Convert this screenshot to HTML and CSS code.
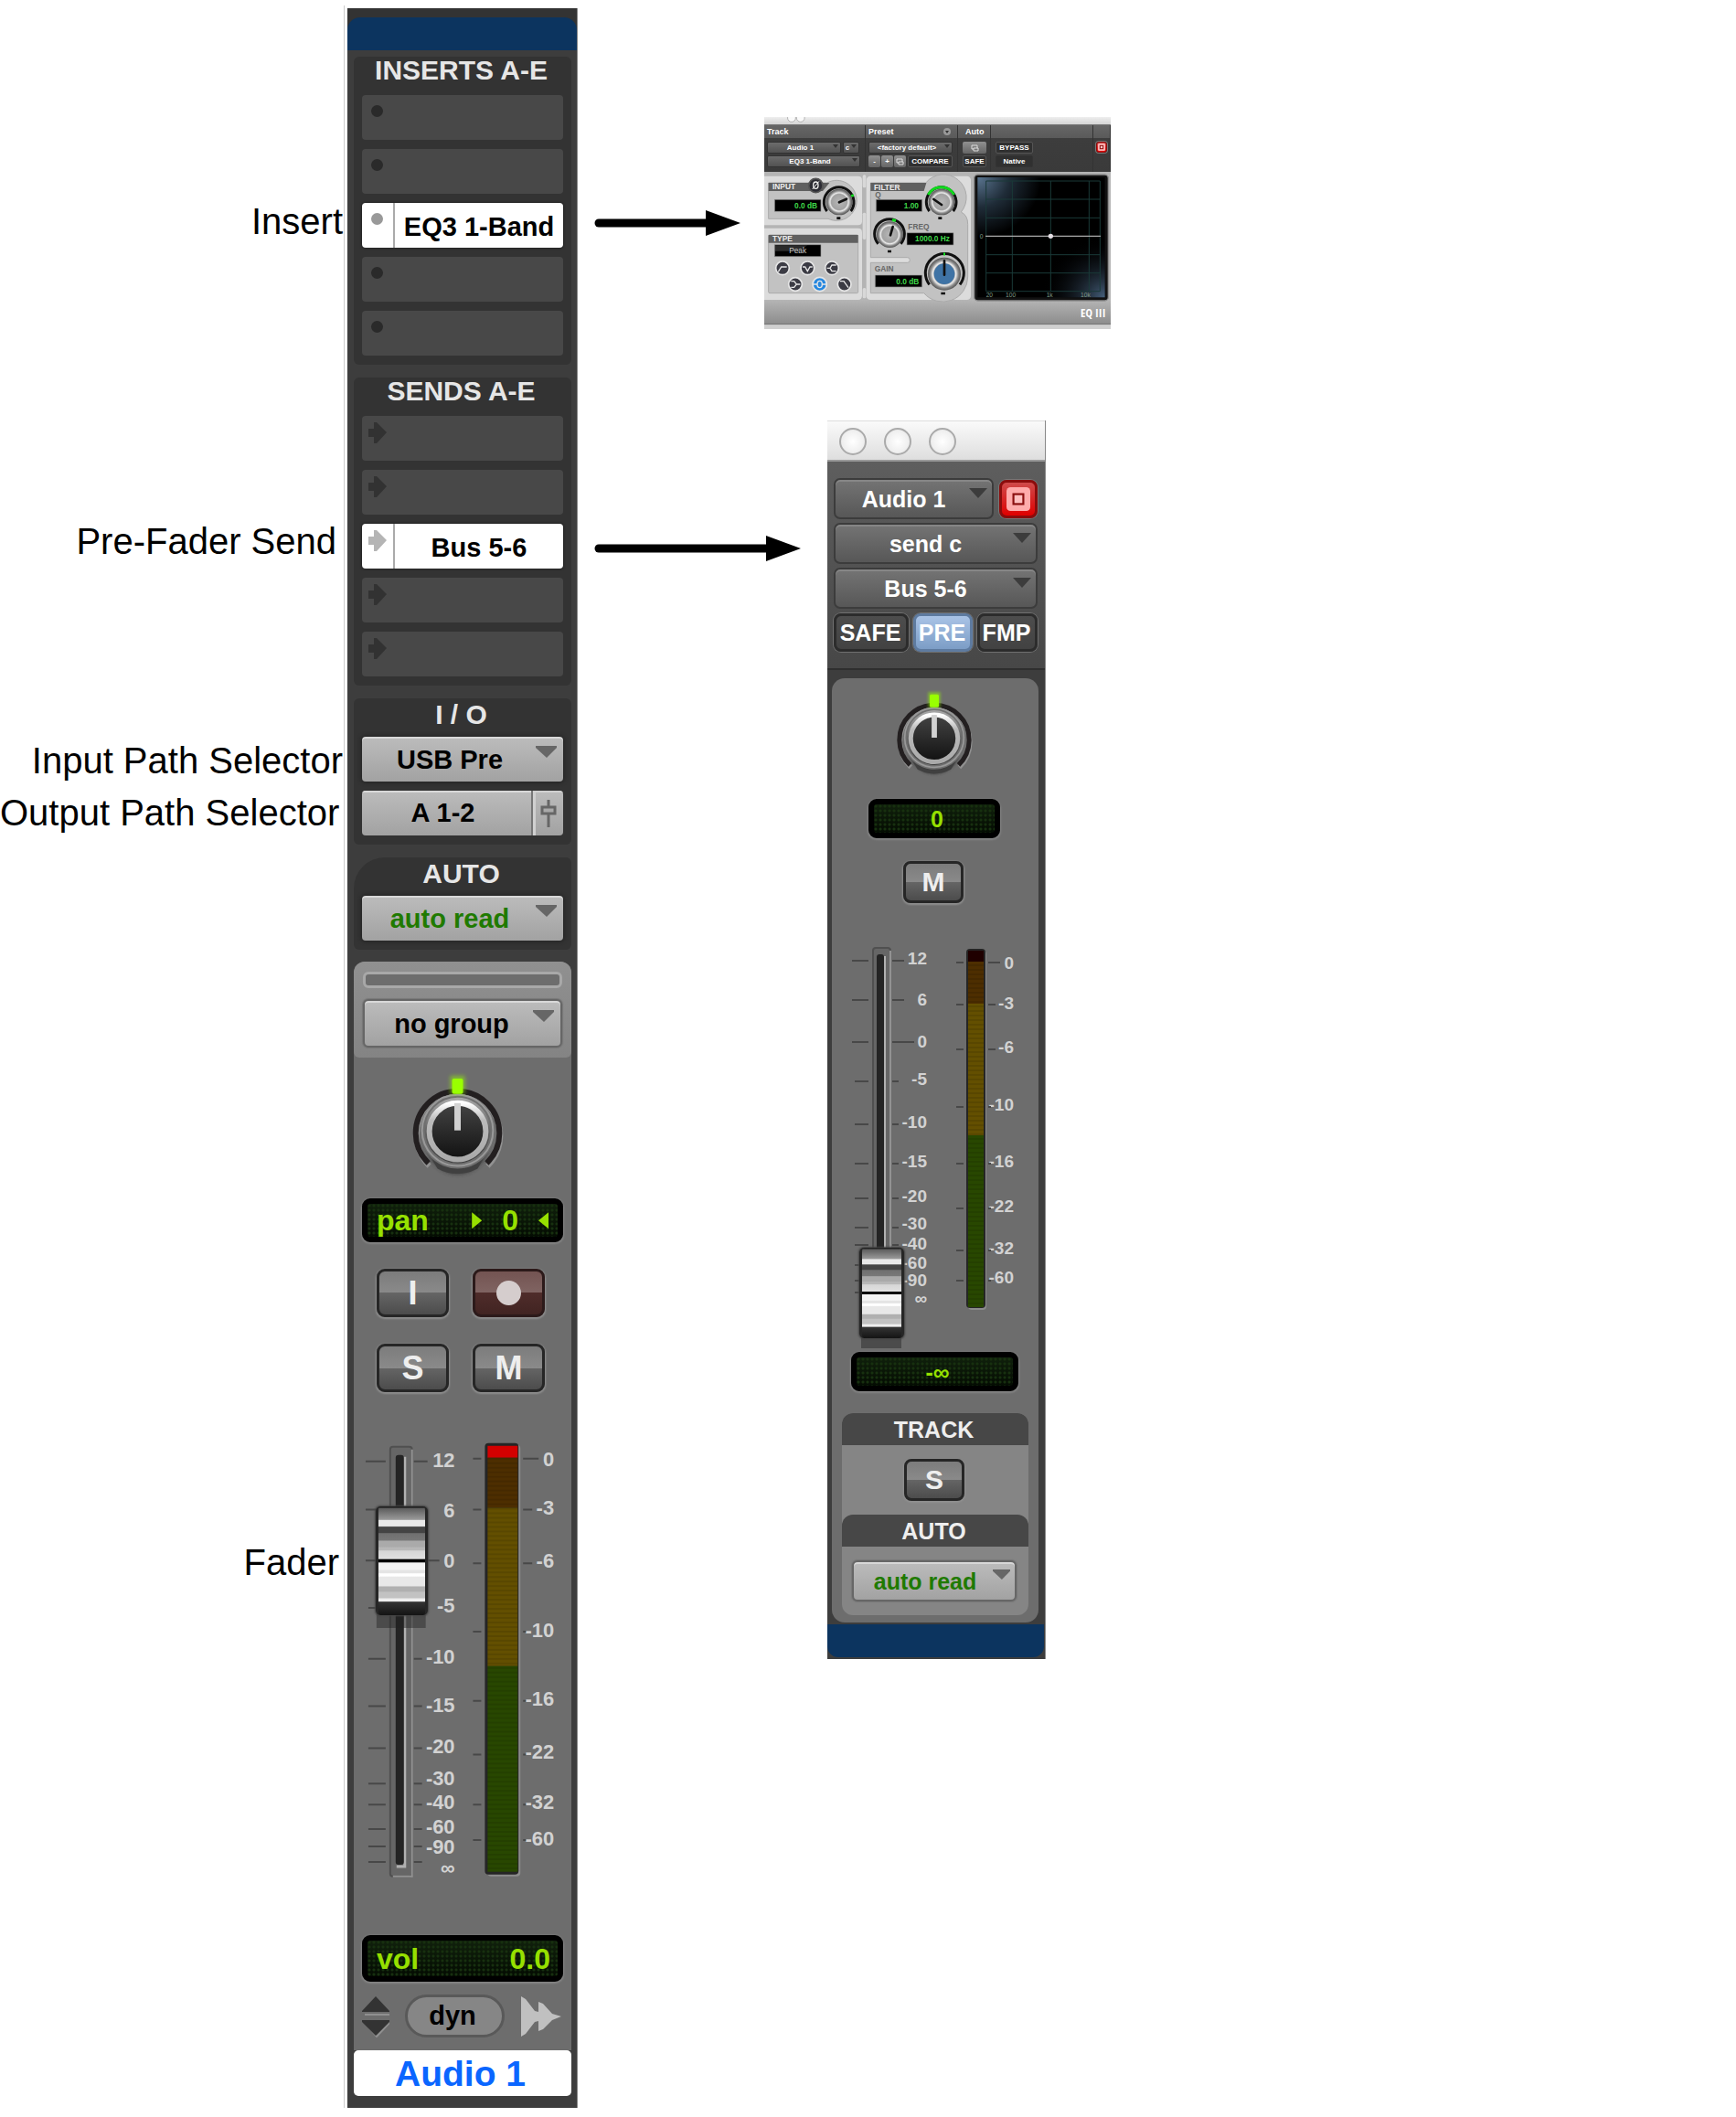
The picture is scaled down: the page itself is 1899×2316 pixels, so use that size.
FILE: index.html
```html
<!DOCTYPE html>
<html lang="en">
<head>
<meta charset="utf-8">
<meta name="viewport" content="width=device-width, initial-scale=1">
<title>Channel strip signal path</title>
<link rel="stylesheet" href="styles.css">
</head>
<body>
<svg class="defs" aria-hidden="true">
  <defs>
    <linearGradient id="ring" x1="0" y1="0" x2="0" y2="1"><stop offset="0" stop-color="#fff"/><stop offset=".3" stop-color="#bbb"/><stop offset="1" stop-color="#aaa"/></linearGradient>
    <linearGradient id="knobface" x1="0" y1="0" x2="0" y2="1"><stop offset="0" stop-color="#444"/><stop offset="1" stop-color="#111"/></linearGradient>
    <linearGradient id="knobbase" x1="0" y1="0" x2="0" y2="1"><stop offset="0" stop-color="#a8a8a8"/><stop offset=".5" stop-color="#666"/><stop offset="1" stop-color="#3c3c3c"/></linearGradient>
    <filter id="soft" x="-50%" y="-50%" width="200%" height="200%"><feGaussianBlur stdDeviation="2"/></filter>
    <symbol id="pan-knob" viewBox="-60 -70 120 130" overflow="visible">
      <path d="M-32 36A46 46 0 1 1 32 36" fill="none" stroke="#919191" stroke-width="6" transform="translate(1 3)"/>
      <path d="M-32 36A46 46 0 1 1 32 36" fill="none" stroke="#231f20" stroke-width="6"/>
      <circle cy="14" r="34" fill="#333" filter="url(#soft)" opacity=".8"/>
      <circle r="41" cy="1" fill="#6f6f6f"/>
      <path d="M-28 32A42 42 0 0 0 28 32L22 42A46 46 0 0 1-22 42Z" fill="#404040"/>
      <circle r="39" fill="none" stroke="#999" stroke-width="2"/>
      <circle r="36" fill="url(#knobbase)"/>
      <circle r="31" cy="1" fill="url(#knobface)" stroke="url(#ring)" stroke-width="6"/>
      <path d="M0-30V0" stroke="#d2d2d2" stroke-width="7"/>
      <rect x="-8" y="-60" width="16" height="20" fill="#9f0" opacity=".5" filter="url(#soft)"/>
      <rect x="-6" y="-57" width="12" height="17" rx="2" fill="#9f0"/>
    </symbol>
    <pattern id="scan" width="8" height="5" patternUnits="userSpaceOnUse"><rect width="8" height="2" fill="#000" opacity=".1"/></pattern>
    <radialGradient id="metal"><stop offset="0" stop-color="#b8b8b8"/><stop offset=".6" stop-color="#a2a2a2"/><stop offset=".7" stop-color="#ececec"/><stop offset=".85" stop-color="#8a8a8a"/><stop offset="1" stop-color="#555"/></radialGradient>
    <linearGradient id="plate" x1="0" y1="0" x2="0" y2="1"><stop offset="0" stop-color="#b5b5b5"/><stop offset="1" stop-color="#8c8c8c"/></linearGradient>
    <radialGradient id="glass1" cx="0" cy="0" r="1"><stop offset="0" stop-color="#5a7590"/><stop offset=".25" stop-color="#1f2c38"/><stop offset=".5" stop-color="#000"/></radialGradient>
    <radialGradient id="glass2" cx="1" cy="1" r=".5"><stop offset="0" stop-color="#46607c"/><stop offset="1" stop-color="#000" stop-opacity="0"/></radialGradient>
  </defs>
</svg>

<main class="diagram">
  <div class="labels">
    <p class="label label-insert flush">Insert</p>
    <p class="label label-send">Pre-Fader Send</p>
    <p class="label label-input flush">Input Path Selector</p>
    <p class="label label-output">Output Path Selector</p>
    <p class="label label-fader">Fader</p>
  </div>

  <section class="strip" aria-label="Audio 1 channel strip">
    <div class="strip-cap"><div class="strip-color"></div></div>

    <div class="bank">
      <h2 class="bank-title">INSERTS A-E</h2>
      <button class="slot" aria-label="Insert A"><i class="dot"></i></button>
      <button class="slot" aria-label="Insert B"><i class="dot"></i></button>
      <button class="slot used"><span class="mark"><i class="dot"></i></span><span class="slot-name">EQ3 1-Band</span></button>
      <button class="slot" aria-label="Insert D"><i class="dot"></i></button>
      <button class="slot" aria-label="Insert E"><i class="dot"></i></button>
    </div>

    <div class="bank">
      <h2 class="bank-title">SENDS A-E</h2>
      <button class="slot" aria-label="Send A"><svg class="send-arrow" viewBox="0 0 20 23"><path d="M0 7H6V0H9L20 11 9 23H6V16H0Z"/></svg></button>
      <button class="slot" aria-label="Send B"><svg class="send-arrow" viewBox="0 0 20 23"><path d="M0 7H6V0H9L20 11 9 23H6V16H0Z"/></svg></button>
      <button class="slot used"><span class="mark"><svg class="send-arrow" viewBox="0 0 20 23"><path d="M0 7H6V0H9L20 11 9 23H6V16H0Z"/></svg></span><span class="slot-name">Bus 5-6</span></button>
      <button class="slot" aria-label="Send D"><svg class="send-arrow" viewBox="0 0 20 23"><path d="M0 7H6V0H9L20 11 9 23H6V16H0Z"/></svg></button>
      <button class="slot" aria-label="Send E"><svg class="send-arrow" viewBox="0 0 20 23"><path d="M0 7H6V0H9L20 11 9 23H6V16H0Z"/></svg></button>
    </div>

    <div class="bank">
      <h2 class="bank-title low">I / O</h2>
      <select class="picker" aria-label="Input path"><option>USB Pre</option></select>
      <div class="output">
        <button class="output-name">A 1-2</button>
        <button class="output-open" aria-label="Open output window"><svg width="18" height="30" viewBox="0 0 18 30"><path d="M9 0V30" stroke="#666" stroke-width="3"/><rect x="2" y="8" width="14" height="7" fill="#aaa" stroke="#666" stroke-width="3"/></svg></button>
      </div>
    </div>

    <div class="bank bank-auto">
      <h2 class="bank-title low">AUTO</h2>
      <select class="picker green" aria-label="Automation mode"><option>auto read</option></select>
    </div>

    <div class="mixer">
      <div class="group">
        <div class="group-bar"></div>
        <select class="picker framed" aria-label="Group"><option>no group</option></select>
      </div>
      <svg class="art" viewBox="-114 -80 239 155" role="img" aria-label="Pan knob"><use href="#pan-knob" x="-60" y="-70" width="120" height="130"/></svg>
      <div class="lcd lcd-pan"><span class="grow">pan</span><i class="tri-right"></i><span class="pan-value">0</span><i class="tri-left"></i></div>
      <div class="keys">
        <button class="key">I</button>
        <button class="key rec" aria-label="Record enable"><i class="rec-dot"></i></button>
        <button class="key">S</button>
        <button class="key">M</button>
      </div>
      <div class="fader">
        <svg class="art scale" viewBox="387 1539 239 559">
          <rect x="427" y="1583" width="24" height="472" rx="3" fill="#666" stroke="#505050" stroke-width="2"/>
          <path d="M451 1586V2055H430" fill="none" stroke="#929292" stroke-width="2"/>
          <path d="M443 1594V2044H434" fill="none" stroke="#b0b0b0" stroke-width="3"/>
          <rect x="433" y="1592" width="9" height="450" rx="3" fill="#242424"/>
          <path class="tick" d="M400 1599h22M400 1652h22M400 1708h22M403 1760h19M403 1816h19M403 1868h19M403 1914h19M403 1953h19M403 1976h19M403 2003h19M403 2022h19M403 2039h19M453 1599h15M453 1652h15M453 1708h28M453 1816h9M453 1868h9M453 1914h9M453 1953h9M453 1976h9M453 2003h9M453 2022h9M453 2039h9"/>
          <path d="M412 1740h54v42h-54z" fill="#222" opacity=".45"/>
          <g class="marks">
            <text x="498" y="1605">12</text><text x="498" y="1661">6</text><text x="498" y="1716">0</text><text x="498" y="1765">-5</text><text x="498" y="1821">-10</text><text x="498" y="1874">-15</text><text x="498" y="1920">-20</text><text x="498" y="1955">-30</text><text x="498" y="1981">-40</text><text x="498" y="2008">-60</text><text x="498" y="2030">-90</text><text x="498" y="2053">∞</text>
            <text x="607" y="1604">0</text><text x="607" y="1658">-3</text><text x="607" y="1716">-6</text><text x="607" y="1792">-10</text><text x="607" y="1867">-16</text><text x="607" y="1926">-22</text><text x="607" y="1981">-32</text><text x="607" y="2021">-60</text>
          </g>
          <path class="tick" d="M518 1596h9M518 1652h9M518 1711h9M518 1786h9M518 1862h9M518 1921h9M518 1976h9M518 2015h9M573 1596h17M573 1652h10M573 1711h10M573 1786h3M573 1862h3M573 1921h3M573 1976h3M573 2015h3"/>
          <rect x="534" y="1581" width="36" height="474" rx="4" fill="#8c8c8c"/>
          <rect x="531" y="1579" width="37" height="474" rx="4" fill="#252525"/>
          <path d="M534 1582h33v13h-33z" fill="#d40000"/>
          <path d="M534 1595h33v55h-33z" fill="#4d2e00"/>
          <path d="M534 1650h33v174h-33z" fill="#634f00"/>
          <path d="M534 1824h33v226h-33z" fill="#284700"/>
          <path d="M534 1595h33v455h-33z" fill="url(#scan)"/>
        </svg>
        <input class="cap" type="range" min="0" max="440" value="331" aria-label="Volume">
      </div>
      <div class="lcd lcd-vol"><span class="grow">vol</span><span>0.0</span></div>
      <div class="foot">
        <svg width="30" height="46" viewBox="0 0 30 46"><path d="M3 21H31M3 29 16 45 31 29" stroke="#909090" stroke-width="2" fill="none"/><path d="M0 17 15 1 30 17V18H0ZM0 27V29L15 44 30 29V27Z" fill="#333"/></svg>
        <button class="dyn">dyn</button>
        <svg width="44" height="46" viewBox="0 0 44 46"><path d="M0 1 5 4 15 17 19 18V7L24 9 34 20 44 23 34 27 24 37 19 39V28L15 29 5 42 0 45Z" fill="#c0c0c0"/></svg>
      </div>
    </div>
    <div class="track-name">Audio 1</div>
  </section>

  <div class="windows">
    <div class="callout callout-eq">
      <svg class="arrow" width="160" height="28" viewBox="0 0 160 28"><path d="M5 14H124" stroke="#000" stroke-width="9" stroke-linecap="round"/><path d="M122 0 160 14 122 28Z"/></svg>

      <section class="eq" aria-label="EQ3 1-Band plug-in">
        <svg class="eq-bar" viewBox="0 0 379 9"><g fill="#fafafa" stroke="#aaa"><circle cx="10" cy="1" r="5"/><circle cx="21" cy="1" r="5"/></g></svg>
        <div class="eq-head">
          <div class="eq-col"><h3>Track</h3>
            <div class="eq-row"><select class="mini w81" aria-label="Track"><option>Audio 1</option></select><select class="mini w18" aria-label="Insert position"><option>c</option></select></div>
            <div class="eq-row"><select class="mini w102" aria-label="Plug-in"><option>EQ3 1-Band</option></select></div>
          </div>
          <div class="eq-col"><h3>Preset<svg width="8" height="8" viewBox="0 0 8 8"><circle cx="4" cy="4" r="4" fill="#999"/><path d="M2 3H6L4 6Z" fill="#333"/></svg></h3>
            <div class="eq-row"><select class="mini w92" aria-label="Preset"><option>&lt;factory default&gt;</option></select></div>
            <div class="eq-row"><span class="trio"><button class="lite">-</button><button class="lite">+</button><button class="lite" aria-label="Preset list"><svg width="9" height="8" viewBox="0 0 9 8"><path d="M1 1H7V4M1 1V5H3M3 4H8V7H3Z" fill="none" stroke="#ddd"/></svg></button></span><button class="dark w49">COMPARE</button></div>
          </div>
          <div class="eq-col inset"><h3 class="shift">Auto</h3>
            <div class="eq-row"><button class="lite w26" aria-label="Automation enable"><svg width="9" height="8" viewBox="0 0 9 8"><path d="M1 1H7V4M1 1V5H3M3 4H8V7H3Z" fill="none" stroke="#ddd"/></svg></button></div>
            <div class="eq-row"><button class="dark w26">SAFE</button></div>
          </div>
          <div class="eq-col inset"><h3></h3>
            <div class="eq-row"><button class="dark w41">BYPASS</button></div>
            <div class="eq-row"><button class="dark w41 plain">Native</button></div>
          </div>
          <div class="eq-col"><h3></h3>
            <div class="eq-row"><button class="target small" aria-label="Target"><svg viewBox="0 0 24 24"><rect width="24" height="24" rx="4" fill="#ffb5b5"/><rect x="7" y="7" width="10" height="10" fill="#ffc9c9" stroke="#8c1010" stroke-width="3"/></svg></button></div>
          </div>
        </div>
        <svg class="eq-body" viewBox="48 220 1137 516" role="img" aria-label="EQ controls and response curve">
          <rect x="48" y="220" width="1137" height="516" fill="#b4b4b4"/>
          <rect x="48" y="640" width="1137" height="80" fill="url(#plate)"/>
          <path d="M48 718h1137v4H48z" fill="#777"/><path d="M48 722h1137v14H48z" fill="#d0d0d0"/>
          <g fill="#dcdcdc">
            <path d="M48 234H356Q369 234 369 247V383Q369 395 356 395H48Z"/>
            <path d="M48 405H356Q369 405 369 418V626Q369 640 356 640H48Z"/>
            <rect x="383" y="234" width="343" height="406" rx="13"/>
          </g>
          <g fill="#d8d8d8"><rect x="371" y="230" width="11" height="42" rx="5"/><rect x="371" y="354" width="11" height="88" rx="5"/><rect x="371" y="601" width="11" height="34" rx="5"/></g>
          <g fill="#c2c2c2" stroke="#aaa" stroke-width="3">
            <path d="M62 256H254A66 66 0 1 1 258 374H62Z"/>
            <rect x="62" y="427" width="294" height="191" rx="4"/>
            <path d="M397 256H578A66 66 0 0 1 694 352Q716 362 716 392V565A82 82 0 0 1 572 618H397V518H518Q526 518 526 510 526 501 518 501H397Z"/>
          </g>
          <path d="M62 256H262L240 283H62ZM62 427H356V453H62ZM397 256H580L572 283H397Z" fill="#606060"/>
          <g fill="#000" stroke="#999" stroke-width="2"><path d="M82 311H234V350H82ZM415 311H566V350H415ZM516 420H669V460H516ZM412 559H566V598H412ZM82 459H234V498H82Z"/></g>
          <path d="M84 461H190L160 480H84Z" fill="#2b2b2b"/>
          <g class="plate-title"><text x="75" y="278">INPUT</text><text x="75" y="449">TYPE</text><text x="408" y="279">FILTER</text></g>
          <g class="plate-name"><text x="412" y="304">Q</text><text x="520" y="410">FREQ</text><text x="410" y="548">GAIN</text></g>
          <g class="plate-value"><text x="222" y="340">0.0 dB</text><text x="555" y="340">1.00</text><text x="657" y="449">1000.0 Hz</text><text x="556" y="588">0.0 dB</text></g>
          <text class="plate-mode" x="158" y="487">Peak</text>
          <g fill="none" stroke="#111" stroke-width="9">
            <path d="M254 349A49 49 0 1 1 332 349"/><path d="M590 349A49 49 0 1 1 668 349"/><path d="M422 456A49 49 0 1 1 496 456"/><path d="M590 590A63 63 0 1 1 690 590"/>
          </g>
          <g fill="none" stroke="#0fdb1c" stroke-width="9"><path d="M586 295A49 49 0 0 1 671 295"/><path d="M336 294 339 302M468 378 480 380M636 490 642 490"/></g>
          <g fill="url(#metal)"><circle cx="294" cy="319" r="43"/><circle cx="630" cy="319" r="43"/><circle cx="460" cy="426" r="43"/><circle cx="639" cy="555" r="54"/></g>
          <circle cx="639" cy="555" r="34" fill="#3f73a5"/>
          <path d="M294 320 318 309M630 328 604 310M462 428 470 400M639 558V512" stroke="#111" stroke-width="8" stroke-linecap="round"/>
          <path d="M286 368H298V376H286ZM619 368H631V376H619ZM453 477H465V485H453ZM628 615H642V623H628Z" fill="#111"/>
          <circle cx="217" cy="265" r="23" fill="#2b2b33" stroke="#555" stroke-width="5"/><ellipse cx="217" cy="264" rx="8" ry="11" fill="none" stroke="#eee" stroke-width="4"/><path d="M206 277 228 251" stroke="#eee" stroke-width="3"/>
          <g fill="#3b3b44" stroke="#e6e6e6" stroke-width="5"><circle cx="108" cy="536" r="22"/><circle cx="190" cy="536" r="22"/><circle cx="270" cy="536" r="22"/><circle cx="150" cy="589" r="22"/><circle cx="230" cy="589" r="23" fill="#2587df"/><circle cx="311" cy="589" r="22"/></g>
          <g fill="none" stroke="#e8e8e8" stroke-width="4"><path d="M94 548 104 532H122M174 532H182L190 546 198 532H206M254 536H264L270 526H284M264 536 270 546H284M136 579H146L154 589 146 599H136M154 589H166M208 589H222M238 589H252M297 579H309L324 600"/><ellipse cx="230" cy="589" rx="8" ry="11"/></g>
          <rect x="737" y="229" width="440" height="414" rx="12" fill="#111" stroke="#8d8d8d" stroke-width="4"/>
          <rect x="748" y="238" width="418" height="394" fill="url(#glass1)"/><rect x="748" y="238" width="418" height="394" fill="url(#glass2)"/>
          <path d="M776 250H1150V612H776ZM862 250V612M988 250V612M1114 250V612M776 310H1150M776 371H1150M776 492H1150M776 552H1150" fill="none" stroke="#1a3a38" stroke-width="3"/>
          <path d="M774 431H1152" stroke="#aaa" stroke-width="4"/><circle cx="988" cy="431" r="8" fill="#e5dfe5"/>
          <g class="plate-axis"><text x="755" y="438">0</text><text x="776" y="632">20</text><text x="840" y="632">100</text><text x="974" y="632">1k</text><text x="1086" y="632">10k</text></g>
          <text class="plate-logo" x="1086" y="697">EQ III</text>
        </svg>
      </section>
    </div>

    <div class="callout callout-send">
      <svg class="arrow arrow-send" width="226" height="28" viewBox="0 0 226 28"><path d="M5 14H190" stroke="#000" stroke-width="9" stroke-linecap="round"/><path d="M188 0 226 14 188 28Z"/></svg>

      <section class="send" aria-label="Send c window">
        <div class="send-bar"><i class="light"></i><i class="light"></i><i class="light"></i></div>
        <div class="send-head">
          <div class="send-row"><select class="combo" aria-label="Track"><option>Audio 1</option></select><button class="target" aria-label="Target"><svg viewBox="0 0 24 24"><rect width="24" height="24" rx="4" fill="#ffabab"/><rect x="7" y="7" width="10" height="10" fill="#ffc0c0" stroke="#8c1010" stroke-width="2"/></svg></button></div>
          <select class="combo" aria-label="Send"><option>send c</option></select>
          <select class="combo" aria-label="Output"><option>Bus 5-6</option></select>
          <div class="modes"><button class="mode">SAFE</button><button class="mode on">PRE</button><button class="mode">FMP</button></div>
        </div>
        <div class="send-panel">
          <svg class="art" viewBox="-112 -65 226 132" role="img" aria-label="Send pan knob"><g transform="scale(.83)"><use href="#pan-knob" x="-60" y="-70" width="120" height="130"/></g></svg>
          <div class="lcd lcd-small lcd-sendpan"><span>0</span></div>
          <button class="key key-small key-mute">M</button>
          <div class="fader">
            <svg class="art scale" viewBox="910 1002 226 477">
              <rect x="955" y="1037" width="19" height="390" rx="3" fill="#666" stroke="#505050" stroke-width="2"/>
              <path d="M974 1040V1400" stroke="#929292" stroke-width="2"/>
              <path d="M968 1046V1400" stroke="#b0b0b0" stroke-width="2"/>
              <rect x="959" y="1044" width="8" height="370" rx="3" fill="#242424"/>
              <path class="tick" d="M932 1051h18M932 1094h18M932 1140h18M935 1183h15M935 1230h15M935 1273h15M935 1311h15M935 1343h15M935 1362h15M935 1384h15M935 1401h15M935 1414h15M976 1051h13M976 1094h13M976 1140h24M976 1183h7M976 1230h7M976 1273h7M976 1311h7M976 1343h7M976 1362h7"/>
              <path d="M942 1440h44v35h-44z" fill="#222" opacity=".45"/>
              <g class="marks marks-small">
                <text x="1014" y="1055">12</text><text x="1014" y="1100">6</text><text x="1014" y="1146">0</text><text x="1014" y="1187">-5</text><text x="1014" y="1234">-10</text><text x="1014" y="1277">-15</text><text x="1014" y="1315">-20</text><text x="1014" y="1345">-30</text><text x="1014" y="1367">-40</text><text x="1014" y="1388">-60</text><text x="1014" y="1407">-90</text><text x="1014" y="1427">∞</text>
                <text x="1109" y="1060">0</text><text x="1109" y="1104">-3</text><text x="1109" y="1152">-6</text><text x="1109" y="1215">-10</text><text x="1109" y="1277">-16</text><text x="1109" y="1326">-22</text><text x="1109" y="1372">-32</text><text x="1109" y="1404">-60</text>
              </g>
              <path class="tick" d="M1046 1053h8M1046 1099h8M1046 1148h8M1046 1211h8M1046 1273h8M1046 1322h8M1046 1368h8M1046 1401h8M1081 1053h13M1081 1099h8M1081 1148h8M1081 1211h3M1081 1273h3M1081 1322h3M1081 1368h3M1081 1401h3"/>
              <rect x="1059" y="1040" width="20" height="393" rx="4" fill="#8c8c8c"/>
              <rect x="1057" y="1038" width="21" height="393" rx="4" fill="#252525"/>
              <path d="M1059 1040h17v12h-17z" fill="#1f0000"/>
              <path d="M1059 1052h17v46h-17z" fill="#4d2e00"/>
              <path d="M1059 1098h17v144h-17z" fill="#634f00"/>
              <path d="M1059 1242h17v188h-17z" fill="#284700"/>
              <path d="M1059 1052h17v378h-17z" fill="url(#scan)"/>
            </svg>
            <input class="cap cap-small" type="range" min="0" max="363" value="0" aria-label="Send level">
          </div>
          <div class="lcd lcd-small lcd-level"><span>-∞</span></div>
          <div class="track-box">
            <h3 class="box-title">TRACK</h3>
            <div class="box-body"><button class="key key-small">S</button></div>
            <h3 class="box-title">AUTO</h3>
            <div class="box-body"><select class="picker picker-small framed green" aria-label="Send automation mode"><option>auto read</option></select></div>
          </div>
        </div>
        <div class="send-color"></div>
      </section>
    </div>
  </div>
</main>
</body>
</html>
```
FILE: styles.css
```css
* { box-sizing: border-box; }
body { margin: 0; background: #fff; color: #000; font-family: "Liberation Sans", Arial, sans-serif; }
h2, h3, p { margin: 0; }
button, select { font-family: inherit; font-weight: bold; border: 0; padding: 0; margin: 0; border-radius: 0; }
select { appearance: none; text-align: center; text-align-last: center; cursor: pointer; background-repeat: no-repeat; }
i, svg { display: block; }
.defs { position: absolute; width: 0; height: 0; }

.diagram { display: flex; align-items: flex-start; padding: 6px 0 10px; }

/* Labels beside the strip */
.labels { flex: none; width: 377px; align-self: stretch; border-right: 1px solid #ccc; display: flex; flex-direction: column; text-align: right; }
.label { font-size: 40px; line-height: 48px; padding-right: 5px; white-space: nowrap; }
.label.flush { padding-right: 1px; }
.label-insert { margin-top: 212px; }
.label-send { margin-top: 302px; padding-right: 8px; }
.label-input { margin-top: 192px; }
.label-output { margin-top: 9px; }
.label-fader { margin-top: 772px; }

/* Channel strip */
.strip { flex: none; width: 252px; margin: 3px 0 0 3px; padding: 0 6px 13px 7px; background: #3d3d3d; font-size: 30px; font-weight: bold; display: flex; flex-direction: column; border-right: 1px solid #888; }
.strip-cap { margin: 0 -6px 7px -7px; padding-top: 10px; background: #333; }
.strip-color { height: 36px; background: #0c345f; border-radius: 14px 14px 0 0; }
.bank { margin-bottom: 14px; padding: 0 9px 10px; border-radius: 6px; background: #333; display: grid; row-gap: 10px; }
.bank-auto { border-top-left-radius: 34px; margin-bottom: 13px; }
.bank-title { height: 32px; padding-right: 3px; font-size: 30px; line-height: 30px; text-align: center; color: #e6e6e6; white-space: nowrap; }
.bank-title.low { line-height: 36px; }

.slot { display: flex; align-items: flex-start; height: 49px; background: #484848; border-radius: 4px; font-size: 29px; text-align: center; overflow: hidden; }
.slot.used { background: #fff; box-shadow: 0 0 3px #111; }
.mark { width: 36px; height: 49px; border-right: 2px solid #aaa; }
.slot-name { flex: 1; line-height: 52px; white-space: nowrap; }
.dot { width: 13px; height: 13px; margin: 11px 10px; border-radius: 50%; background: #2a2a2a; }
.used .dot { background: #999; }
.send-arrow { width: 20px; height: 23px; margin: 7px; fill: #323232; }
.used .send-arrow { fill: #b5b5b5; }

.picker { width: 100%; height: 49px; padding-right: 28px; color: #000; font-size: 29px; border-radius: 4px; box-shadow: 0 0 4px 1px #222, inset 0 2px 0 #d8d8d8;
  background-color: #aaa;
  background-image: url("data:image/svg+xml,%3Csvg xmlns='http://www.w3.org/2000/svg' width='23' height='13'%3E%3Cpath d='M0 0H23V2L12 13 0 2Z' fill='%23666'/%3E%3C/svg%3E"), linear-gradient(#bcbcbc, #a2a2a2);
  background-position: right 7px top 10px, 0 0; }
.picker.green { color: #1f7a00; }
.picker.framed { border: 2px solid #666; border-radius: 6px; box-shadow: 0 0 1px 1px #777, inset 0 2px 0 #d8d8d8; }
.picker-small { height: 45px; padding-right: 20px; font-size: 25px; background-size: 19px 11px, auto; background-position: right 5px top 8px, 0 0; }
.output { display: grid; grid-template-columns: 1fr 35px; height: 49px; border-radius: 4px; overflow: hidden; background: linear-gradient(#bcbcbc, #a2a2a2); }
.output button { background: none; box-shadow: inset 0 2px 0 #d8d8d8; }
.output-name { font-size: 29px; padding-right: 8px; }
.output .output-open { display: grid; place-items: center; border-left: 2px solid #777; box-shadow: inset 3px 2px 0 #d0d0d0; }

.mixer { background: #6d6d6d; border-radius: 12px 12px 0 0; display: flex; flex-direction: column; }
.group { padding: 11px 10px; display: grid; row-gap: 12px; background: linear-gradient(#909090, #848484); border-radius: 12px 12px 6px 6px; }
.group-bar { height: 18px; border: 3px solid #a8a8a8; border-radius: 6px; background: #6d6d6d; }
.group .picker { height: 53px; padding-right: 24px; }
.art { width: 100%; height: auto; overflow: visible; }

.lcd { display: flex; align-items: center; margin: 0 9px; height: 48px; border: 6px solid #000; border-radius: 9px; color: #96e000; font-size: 32px; font-weight: bold; line-height: 36px; box-shadow: 0 1px 2px 1px #858585;
  background: radial-gradient(circle at 2px 2px, #17300f 1px, transparent 2px) 0 0 / 5px 5px, linear-gradient(#10200c, #040c02); }
.grow { flex: 1; padding-left: 10px; }
.lcd-vol { height: 51px; margin-top: 19px; padding-right: 8px; }
.pan-value { padding: 0 22px; }
.tri-right, .tri-left { width: 11px; height: 18px; background: #96e000; }
.tri-right { clip-path: polygon(0 0, 100% 50%, 0 100%); }
.tri-left { clip-path: polygon(100% 0, 0 50%, 100% 100%); margin-right: 10px; }
.lcd-small { height: 43px; font-size: 25px; justify-content: center; padding-left: 6px; }

.keys { display: grid; grid-template-columns: 79px 79px; gap: 29px 26px; padding: 29px 0 0 25px; }
.key { height: 53px; display: grid; place-items: center; font-size: 36px; line-height: 40px; color: #eee; border: 3px solid #262626; border-radius: 9px; background: linear-gradient(#7c7c7c, #8a8a8a 50%, #656565 50%, #4c4c4c); box-shadow: 0 1px 2px 1px #909090; }
.key.rec { border-color: #2c1a1a; background: linear-gradient(#745452, #806462 50%, #4f2c2a 50%, #412422); }
.rec-dot { width: 27px; height: 27px; border-radius: 50%; background: #d5cdcd; }
.key-small { width: 66px; height: 46px; font-size: 30px; line-height: 34px; border-radius: 8px; }

.fader { display: grid; margin-top: 16px; }
.fader > * { grid-area: 1 / 1; }
.tick { stroke: #484848; stroke-width: 2; }
.marks { font-size: 22px; font-weight: bold; fill: #d2d2d2; text-anchor: end; }
.marks-small { font-size: 19px; }
.cap { appearance: none; writing-mode: vertical-lr; direction: rtl; width: 57px; height: 559px; margin: 0 0 0 24px; padding: 0; background: none; }
.cap::-webkit-slider-runnable-track { background: none; }
.cap::-webkit-slider-thumb { appearance: none; width: 57px; height: 119px; border: solid #262626; border-width: 0 3px; border-radius: 5px; box-shadow: 0 0 2px 1px #444;
  background: linear-gradient(#222 0 1%, #5e5e5e 2%, #999 12%, #e8e8e8 13% 18%, #444 19% 24%, #707070 25%, #787878 31%, #aaa 32% 37%, #b8b8b8 38% 40%, #d6d6d6 41%, #e0e0e0 48%, #000 49% 51%, #f4f4f4 52% 58%, #e4e4e4 59% 61%, #fff 62% 64%, #e8e8e8 65% 73%, #b0b0b0 74% 78%, #c2c2c2 79% 84%, #eee 85% 87%, #333 88%, #141414); }
.cap-small { width: 49px; height: 462px; margin-left: 30px; }
.cap-small::-webkit-slider-thumb { width: 49px; height: 99px; }

.foot { display: flex; align-items: center; padding: 14px 9px; }
.dyn { width: 109px; height: 47px; margin: 0 18px 0 17px; padding-right: 5px; border: 3px solid #595959; border-radius: 24px; background: #868686; font-size: 29px; }
.track-name { height: 50px; border-radius: 5px; background: #fff; color: #0a66ff; font-size: 39px; line-height: 52px; text-align: center; padding-right: 5px; }

/* Plug-in and send windows */
.windows { flex: 1; padding: 122px 0 0 18px; }
.callout { display: flex; }
.callout-eq { align-items: center; gap: 26px; margin-bottom: 100px; }
.callout-send { align-items: flex-start; gap: 29px; }
.arrow { flex: none; }
.arrow-send { margin-top: 126px; }

.eq { flex: none; width: 379px; color: #fff; }
.eq-bar { width: 100%; height: 9px; background: linear-gradient(#eee, #d4d4d4); border-bottom: 1px solid #777; }
.eq-head { display: grid; grid-template-columns: 111px 101px 36px 112px 19px; height: 51px; background: linear-gradient(#666, #5a5a5a 14px, #3d3d3d 14px, #3a3a3a); }
.eq-col { padding-left: 3px; border-right: 1px solid #333; }
.eq-col.inset { padding-left: 5px; }
.eq-col h3 { display: flex; align-items: center; gap: 54px; height: 18px; padding-bottom: 4px; font-size: 9px; line-height: 14px; white-space: nowrap; }
.eq-col h3.shift { padding-left: 3px; }
.eq-row { display: flex; gap: 2px; height: 13px; margin-bottom: 2px; }
.mini, .lite, .dark { flex: none; height: 13px; font-size: 8px; line-height: 11px; color: #fff; border-radius: 2px; white-space: nowrap; }
.mini { padding: 0 8px 0 0; border: 1px solid #333; background-color: #555;
  background-image: url("data:image/svg+xml,%3Csvg xmlns='http://www.w3.org/2000/svg' width='6' height='4'%3E%3Cpath d='M0 0H6L3 4Z' fill='%23333'/%3E%3C/svg%3E"), linear-gradient(#6c6c6c, #525252);
  background-position: right 2px top 2px, 0 0; }
.lite { display: grid; place-items: center; background: linear-gradient(#909090, #666); }
.dark { background: #303030; border: 1px solid #555; }
.dark.plain { border-color: #333; }
.trio { display: grid; grid-template-columns: 13px 13px 13px; column-gap: 1px; }
.w18 { width: 18px; }
.w26 { width: 26px; }
.w41 { width: 41px; }
.w49 { width: 49px; }
.w81 { width: 81px; }
.w92 { width: 92px; }
.w102 { width: 102px; }
.eq-body { width: 100%; height: auto; }
.plate-title { font-size: 25px; font-weight: bold; fill: #eee; }
.plate-name { font-size: 25px; font-weight: bold; fill: #666; }
.plate-value { font-size: 25px; font-weight: bold; fill: #3fd84a; text-anchor: end; }
.plate-mode { font-size: 25px; fill: #ccc; text-anchor: middle; }
.plate-axis { font-size: 20px; fill: #7f9a86; }
.plate-logo { font-family: "Open Sans Condensed", "Liberation Sans Narrow", "Liberation Sans", sans-serif; font-size: 38px; fill: #fff; }

.target { display: grid; place-items: center; flex: none; width: 42px; height: 42px; border: 3px solid #8b0c0c; border-radius: 8px; background: linear-gradient(#cf4a4a, #e00000); box-shadow: 0 0 0 1px #777; }
.target svg { width: 26px; height: 26px; }
.target.small { width: 12px; height: 12px; border-width: 1px; border-radius: 3px; }
.target.small svg { width: 8px; height: 8px; }

.send { flex: none; width: 239px; background: #3d3d3d; color: #fff; padding-bottom: 2px; border-right: 1px solid #888; }
.send-bar { display: flex; gap: 19px; height: 45px; padding: 7px 13px; border-top: 1px solid #ddd; border-bottom: 2px solid #999; background: linear-gradient(#fafafa, #dedede); }
.light { width: 30px; height: 30px; border: 2px solid #aaa; border-radius: 50%; background: radial-gradient(#fff, #f0f0f0 60%, #e2e2e2); }
.send-head { display: grid; row-gap: 4px; padding: 18px 9px 18px 7px; background: linear-gradient(#5e5e5e, #474747); border-bottom: 2px solid #2e2e2e; }
.send-row { display: flex; align-items: center; gap: 6px; }
.combo { width: 100%; height: 45px; padding-right: 22px; border: 2px solid #3c3c3c; border-radius: 7px; color: #fff; font-size: 25px; background-color: #5f5f5f; box-shadow: inset 0 2px 0 #868686;
  background-image: url("data:image/svg+xml,%3Csvg xmlns='http://www.w3.org/2000/svg' width='20' height='11'%3E%3Cpath d='M0 0H20L10 11Z' fill='%233c3c3c'/%3E%3C/svg%3E"), linear-gradient(#747474, #575757);
  background-position: right 5px top 9px, 0 0; }
.modes { display: grid; grid-template-columns: 82px 65px 66px; column-gap: 5px; margin-top: 1px; }
.mode { height: 42px; padding-right: 2px; border: 3px solid #2c2c2c; border-radius: 8px; box-shadow: 0 0 0 1px #707070; background: linear-gradient(#4d4d4d, #424242); color: #fff; font-size: 25px; }
.mode.on { border-color: #5e7ba0; background: linear-gradient(#a9c3e6, #7c9dc6); }
.send-panel { margin: 9px 7px 2px 5px; padding-bottom: 8px; border-radius: 14px; background: #6d6d6d; }
.lcd-sendpan { width: 144px; margin: 0 0 0 40px; }
.key-mute { margin: 25px 0 0 78px; }
.send-panel .fader { margin-top: 14px; }
.lcd-level { width: 183px; margin: 0 0 0 21px; }
.track-box { margin: 24px 11px 0; border-radius: 12px; background: #858585; }
.box-title { height: 35px; padding-right: 3px; border-radius: 12px 12px 0 0; background: #474747; color: #eee; font-size: 25px; line-height: 36px; text-align: center; }
.box-body { display: grid; justify-items: center; padding: 15px 13px 15px 11px; }
.send-color { height: 36px; margin-right: 1px; border-radius: 0 0 12px 12px; background: #0c345f; }
```
